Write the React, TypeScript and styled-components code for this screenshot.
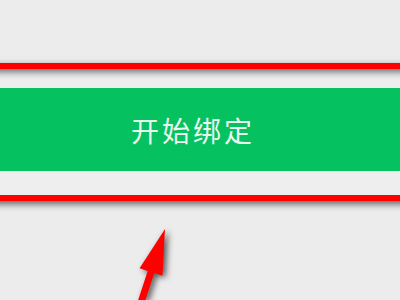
import React from "react";
import styled, { createGlobalStyle } from "styled-components";

const Global = createGlobalStyle`
  html, body { margin: 0; padding: 0; background: #ececec; overflow: hidden; }
  body { font-family: "Noto Sans CJK SC", "Noto Sans", sans-serif; }
`;

const Page = styled.div`
  position: relative;
  width: 400px;
  height: 300px;
  padding-top: 63px;
  box-sizing: border-box;
  background: #ececec;
  overflow: hidden;
`;

const Highlight = styled.div`
  margin: 0 -12px;
  padding: 19px 12px 24px;
  border-top: 6px solid #ff0000;
  border-bottom: 6px solid #ff0000;
  box-shadow: 0 3px 7px rgba(0, 0, 0, 0.6),
    inset 0 6px 7px -3px rgba(0, 0, 0, 0.55);
  background: #eeeeee;
`;

const BindButton = styled.button`
  display: flex;
  align-items: center;
  justify-content: center;
  width: 100%;
  height: 83px;
  margin: 0;
  padding: 0 14px 0 0;
  border: none;
  border-radius: 0;
  background: #06c160;
  color: #e9f8ee;
  font-family: "Noto Sans CJK SC", "Noto Sans", sans-serif;
  font-size: 28px;
  font-weight: 400;
  letter-spacing: 3px;
`;

const Arrow = styled.svg`
  position: absolute;
  left: 0;
  top: 0;
  width: 400px;
  height: 300px;
  pointer-events: none;
  filter: drop-shadow(3px 2px 3px rgba(0, 0, 0, 0.65));
`;

export default function App() {
  return (
    <>
      <Global />
      <Page>
        <Highlight>
          <BindButton>开始绑定</BindButton>
        </Highlight>
        <Arrow viewBox="0 0 400 300">
          <polygon
            fill="#ff0000"
            points="165,229 162.4,275.7 154.3,273.1 143.5,306 136.9,303.9 147.7,270.9 139.6,268.3"
          />
        </Arrow>
      </Page>
    </>
  );
}
